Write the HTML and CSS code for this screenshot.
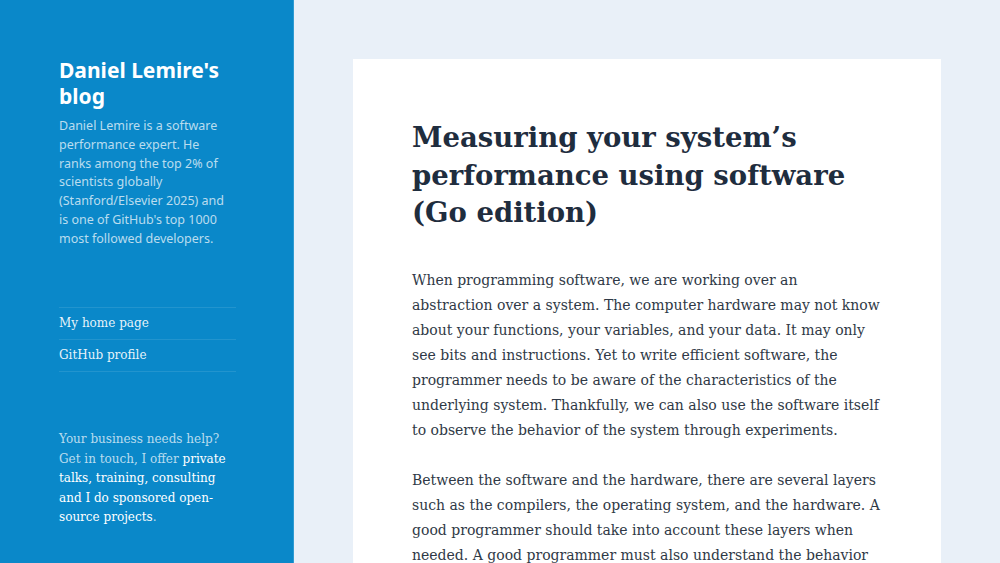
FILE: index.html
```
<!DOCTYPE html>
<html lang="en">
<head>
<meta charset="utf-8">
<title>Measuring your system’s performance using software (Go edition) – Daniel Lemire's blog</title>
<link rel="stylesheet" href="styles.css">
</head>
<body>
<div class="page">
  <aside class="sidebar">
    <header class="branding">
      <p class="site-title"><a href="#">Daniel Lemire's blog</a></p>
      <p class="site-description">Daniel Lemire is a software performance expert. He ranks among the top 2% of scientists globally (Stanford/Elsevier 2025) and is one of GitHub's top 1000 most followed developers.</p>
    </header>
    <nav class="menu">
      <ul>
        <li><a href="#">My home page</a></li>
        <li><a href="#">GitHub profile</a></li>
      </ul>
    </nav>
    <div class="widget">
      <p>Your business needs help? Get in touch, I offer <a href="#">private talks, training, consulting and I do sponsored open-source projects</a>.</p>
    </div>
  </aside>
  <main class="content">
    <article class="post">
      <h1 class="entry-title">Measuring your system’s performance using software (Go edition)</h1>
      <div class="entry-content">
        <p>When programming software, we are working over an abstraction over a system. The computer hardware may not know about your functions, your variables, and your data. It may only see bits and instructions. Yet to write efficient software, the programmer needs to be aware of the characteristics of the underlying system. Thankfully, we can also use the software itself to observe the behavior of the system through experiments.</p>
        <p>Between the software and the hardware, there are several layers such as the compilers, the operating system, and the hardware. A good programmer should take into account these layers when needed. A good programmer must also understand the behavior of their software in terms of these layers.</p>
      </div>
    </article>
  </main>
</div>
</body>
</html>
```
FILE: styles.css
```
html, body {
  margin: 0;
  padding: 0;
}
body {
  background: #e9f0f8;
  font-family: "DejaVu Serif", "Liberation Serif", serif;
  color: #2b3542;
  height: 563px;
  overflow: hidden;
}
a {
  text-decoration: none;
  color: inherit;
}
p {
  margin: 0;
}
.page {
  display: flex;
  align-items: stretch;
  min-height: 563px;
}
.sidebar {
  width: 234px;
  flex: none;
  background: #0a88c9;
  border-right: 1px solid #2f9bd2;
  padding: 57px 0 0 59px;
  box-sizing: content-box;
  min-height: 506px;
}
.branding {
  width: 172px;
}
.site-title {
  font-family: "Noto Sans", sans-serif;
  font-weight: 700;
  font-size: 21px;
  line-height: 26px;
  color: #ffffff;
}
.site-description {
  font-family: "Noto Sans", sans-serif;
  font-size: 12.5px;
  line-height: 18.75px;
  margin-top: 8px;
  color: rgba(255, 255, 255, 0.72);
}
.menu {
  margin-top: 59px;
  width: 177px;
}
.menu ul {
  list-style: none;
  margin: 0;
  padding: 0;
  border-top: 1px solid rgba(255, 255, 255, 0.1);
}
.menu li {
  border-bottom: 1px solid rgba(255, 255, 255, 0.1);
}
.menu a {
  display: block;
  padding: 6px 0;
  font-size: 12px;
  line-height: 19px;
  color: rgba(255, 255, 255, 0.92);
}
.widget {
  margin-top: 58px;
  width: 177px;
  font-size: 12px;
  line-height: 19.5px;
  color: rgba(255, 255, 255, 0.72);
}
.widget a {
  color: #ffffff;
}
.content {
  flex: 1;
  padding: 59px 59px 0 59px;
}
.post {
  background: #ffffff;
  padding: 60px 59px 40px 59px;
  min-height: 460px;
}
.entry-title {
  margin: 0 0 36px 0;
  font-size: 27.5px;
  line-height: 37.5px;
  font-weight: 700;
  color: #1f2d3e;
}
.entry-content {
  font-size: 14px;
  line-height: 25px;
  color: #2f3946;
}
.entry-content p {
  margin-bottom: 25px;
}
```
